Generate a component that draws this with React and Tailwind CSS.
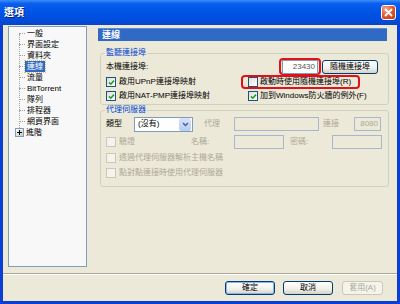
import React from "react";

const treeItems = ["一般", "界面設定", "資料夾", "連線", "流量", "BitTorrent", "隊列", "排程器", "網頁界面"];

function Check({ checked = false, disabled = false }) {
  return (
    <span
      className={`w-[10px] h-[10px] shrink-0 border flex items-center justify-center ${
        disabled
          ? "border-[#CAC8BB] bg-[#F4F3EE]"
          : "border-[#1C5180] bg-[linear-gradient(135deg,#DCDCD7,#FFFFFF)]"
      }`}
    >
      {checked && (
        <svg width="7" height="7" viewBox="0 0 7 7">
          <path d="M1 3.4 L2.8 5.2 L6 1.6" stroke="#21A121" strokeWidth="1.6" fill="none" />
        </svg>
      )}
    </span>
  );
}

function XPButton({ children, className = "", isDefault = false, disabled = false }) {
  return (
    <button
      className={`h-[14px] rounded-[3px] border text-[8px] leading-none flex items-center justify-center ${
        disabled
          ? "border-[#C9C7BA] bg-[#F5F4EA] text-[#ACA899]"
          : "border-[#003C74] bg-[linear-gradient(to_bottom,#FFFFFF,#F0F0EA_60%,#D6D0C5)] text-black"
      } ${isDefault ? "shadow-[inset_0_0_0_1px_#8CB4F2]" : ""} ${className}`}
    >
      {children}
    </button>
  );
}

function Field({ className = "", value = "", disabled = false }) {
  return (
    <div
      className={`h-[14px] border flex items-center justify-end pr-[2px] text-[8px] leading-none ${
        disabled ? "border-[#A7B8CE] bg-[#ECE9D8] text-[#ACA899]" : "border-[#7F9DB9] bg-white text-[#555]"
      } ${className}`}
    >
      {value}
    </div>
  );
}

function Tree() {
  return (
    <div className="w-[79px] h-[241px] shrink-0 border border-[#7F9DB9] bg-[#F8F8F8] pt-px">
      <div className="relative">
        <div className="absolute left-[10px] top-[6px] h-[94px] border-l border-dotted border-[#A0A0A0]" />
        {treeItems.map((t) => (
          <div key={t} className="h-[11px] flex items-center">
            <span className="ml-[10px] w-[6px] border-t border-dotted border-[#A0A0A0]" />
            <span
              className={`px-[2px] leading-[11px] text-[8px] whitespace-nowrap ${
                t === "連線" ? "bg-[#316AC5] text-white outline outline-1 outline-dotted outline-[#D6C07A]" : "text-black"
              }`}
            >
              {t}
            </span>
          </div>
        ))}
        <div className="h-[11px] flex items-center">
          <span className="ml-[6px] w-[9px] h-[9px] border border-[#7F9DB9] bg-[linear-gradient(135deg,#FFFFFF,#C8C8BC)] flex items-center justify-center">
            <svg width="5" height="5" viewBox="0 0 5 5">
              <path d="M0 2.5 H5 M2.5 0 V5" stroke="#000" strokeWidth="1" />
            </svg>
          </span>
          <span className="ml-[2px] leading-[11px] text-[8px] text-black">進階</span>
        </div>
      </div>
    </div>
  );
}

export default function App() {
  return (
    <div className="w-[400px] h-[304px] flex flex-col bg-[#0A3FD6] font-['Liberation_Sans','Noto_Sans_CJK_TC',sans-serif] overflow-hidden">
      {/* TITLE BAR */}
      <div className="h-[25px] shrink-0 flex items-center justify-between pl-[4px] pr-[4px] bg-[linear-gradient(to_bottom,#3D8EF8_0%,#0A5FEE_14%,#0055E5_45%,#004CDD_80%,#0A44C8_100%)]">
        <span className="text-white text-[10px] font-bold leading-none [text-shadow:1px_1px_0_#0A1E6E]">選項</span>
        <span className="w-[15px] h-[15px] rounded-[3px] border border-white bg-[radial-gradient(circle_at_30%_25%,#F2A78E,#E0502A_55%,#C13A12)] flex items-center justify-center">
          <svg width="9" height="9" viewBox="0 0 9 9">
            <path d="M1.5 1.5 L7.5 7.5 M7.5 1.5 L1.5 7.5" stroke="#FFFFFF" strokeWidth="1.8" strokeLinecap="round" />
          </svg>
        </span>
      </div>

      {/* BODY */}
      <div className="flex-1 mx-[3px] mb-[3px] bg-[#ECE9D8] flex flex-col pt-px text-[8px] text-black">
        <div className="h-[241px] flex pl-[5px]">
          <Tree />

          <div className="ml-[11px] w-[291px] flex flex-col">
            <div className="mt-[2px] w-[289px] h-[13px] bg-[#316AC5] border-t border-[#5C8AD6] flex items-center pl-[4px]">
              <span className="text-white text-[9px] font-bold leading-none">連線</span>
            </div>

            {/* 監聽連接埠 */}
            <fieldset className="mt-[7px] ml-[2px] border border-[#D0D0BF] rounded-[3px] pl-[4px] pr-[10px] pb-px">
              <legend className="px-px text-[8px] leading-[10px] text-[#0046D5]">監聽連接埠</legend>
              <div className="h-[17px] flex items-center">
                <span className="ml-px">本機連接埠:</span>
                <div className="flex-1" />
                <div className="w-[42px] h-[17px] border-2 border-[#E3101A] rounded-[4px] flex items-center justify-center">
                  <Field className="w-[36px] h-[12px]" value="23430" />
                </div>
                <XPButton className="ml-px w-[56px]">隨機連接埠</XPButton>
              </div>
              <div className="h-[14px] flex items-center">
                <div className="w-[135px] flex items-center gap-[3px] ml-px">
                  <Check checked />
                  <span>啟用UPnP連接埠映射</span>
                </div>
                <div className="w-[119px] h-[14px] border-2 border-[#E3101A] rounded-[4px] flex items-center pl-[5px] gap-[2px]">
                  <Check />
                  <span className="whitespace-nowrap">啟動時使用隨機連接埠(R)</span>
                </div>
              </div>
              <div className="h-[14px] flex items-center">
                <div className="w-[135px] flex items-center gap-[3px] ml-px">
                  <Check checked />
                  <span>啟用NAT-PMP連接埠映射</span>
                </div>
                <div className="ml-[7px] flex items-center gap-[2px]">
                  <Check checked />
                  <span className="whitespace-nowrap">加到Windows防火牆的例外(F)</span>
                </div>
              </div>
            </fieldset>

            {/* 代理伺服器 */}
            <fieldset className="ml-[2px] border border-[#D0D0BF] rounded-[3px] pl-[4px] pb-[6px]">
              <legend className="px-px text-[8px] leading-[10px] text-[#0046D5]">代理伺服器</legend>
              <div className="h-[18px] flex items-center">
                <span className="w-[28px] ml-px">類型</span>
                <div className="w-[59px] h-[15px] border border-[#7F9DB9] bg-white flex items-center">
                  <span className="flex-1 pl-[3px]">(沒有)</span>
                  <span className="w-[12px] h-[13px] mr-px rounded-[2px] bg-[linear-gradient(to_bottom,#D8E3FC,#B7CBF5)] flex items-center justify-center">
                    <svg width="7" height="5" viewBox="0 0 7 5">
                      <path d="M1 1 L3.5 3.5 L6 1" stroke="#4D6185" strokeWidth="1.5" fill="none" />
                    </svg>
                  </span>
                </div>
                <span className="ml-[11px] w-[30px] text-[#ACA899]">代理</span>
                <Field className="w-[85px]" disabled />
                <span className="ml-[4px] w-[31px] text-[#ACA899]">連接</span>
                <Field className="w-[27px]" value="8080" disabled />
              </div>
              <div className="h-[17px] flex items-center">
                <div className="w-[85px] flex items-center gap-[3px] ml-px">
                  <Check disabled />
                  <span className="text-[#ACA899]">驗證</span>
                </div>
                <span className="w-[43px] text-[#ACA899]">名稱:</span>
                <Field className="w-[50px]" disabled />
                <span className="ml-[6px] w-[42px] text-[#ACA899]">密碼:</span>
                <Field className="w-[50px]" disabled />
              </div>
              <div className="h-[15px] flex items-center gap-[3px] ml-px">
                <Check disabled />
                <span className="text-[#ACA899]">透過代理伺服器解析主機名稱</span>
              </div>
              <div className="h-[15px] flex items-center gap-[3px] ml-px">
                <Check disabled />
                <span className="text-[#ACA899]">點對點連接時使用代理伺服器</span>
              </div>
            </fieldset>
          </div>
        </div>

        <div className="mt-[6px] border-t border-[#ACA899] border-b border-b-white" />

        <div className="mt-[6px] flex justify-end pr-[14px]">
          <XPButton className="w-[50px]" isDefault>確定</XPButton>
          <XPButton className="ml-[8px] w-[50px]">取消</XPButton>
          <XPButton className="ml-[9px] w-[41px]" disabled>套用(A)</XPButton>
        </div>
      </div>
    </div>
  );
}
